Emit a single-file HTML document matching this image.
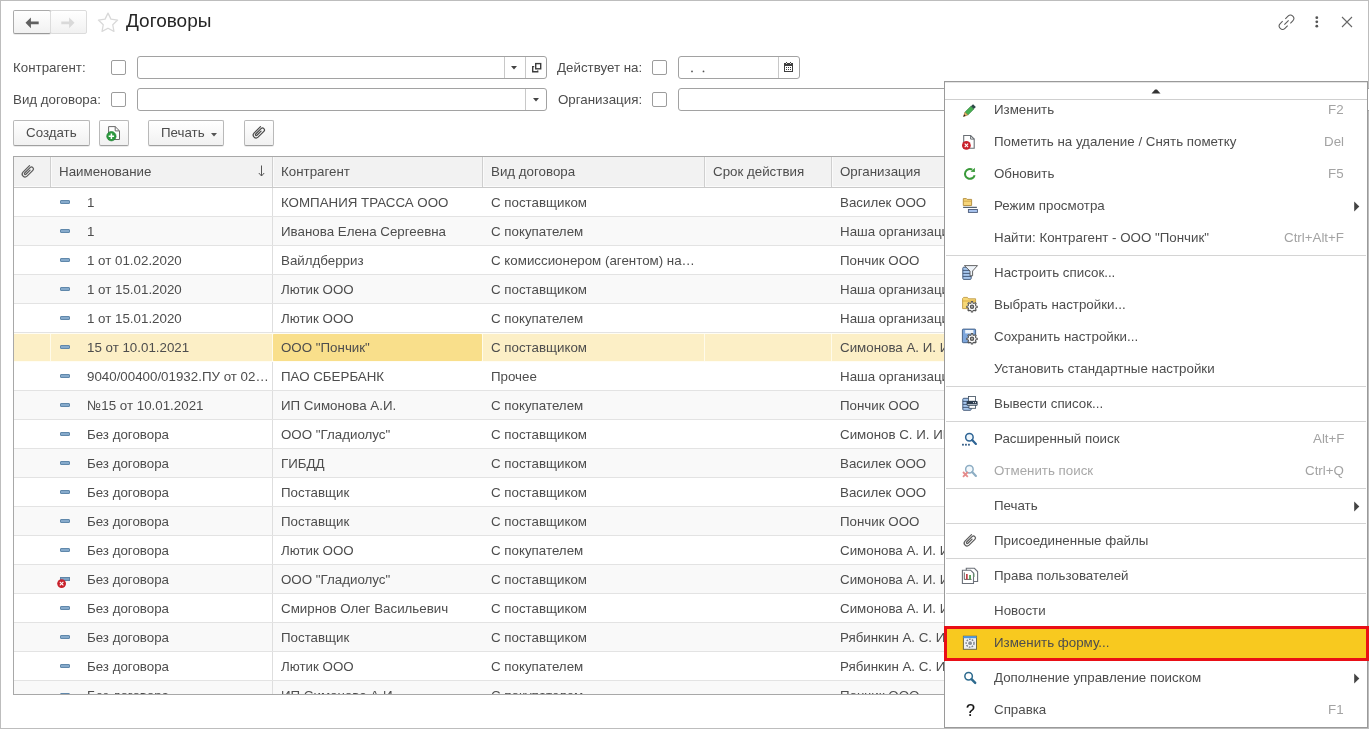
<!DOCTYPE html>
<html><head><meta charset="utf-8">
<style>
*{box-sizing:border-box;margin:0;padding:0}
html,body{width:1369px;height:729px;overflow:hidden;background:#fff}
body{position:relative;font-family:"Liberation Sans",sans-serif;font-size:13.33px;color:#4d4d4d}
.a{position:absolute}
.frame{left:0;top:0;width:1369px;height:729px;border:1px solid #bdbdbd}
.t{position:absolute;white-space:nowrap;line-height:15px;will-change:transform}
.btn{position:absolute;border:1px solid #b9b9b9;border-bottom-color:#a0a0a0;border-radius:2px;background:linear-gradient(#fff,#f1f1f1);box-shadow:0 1px 0 rgba(0,0,0,.08)}
.cb{position:absolute;width:15px;height:15px;border:1px solid #9c9c9c;border-radius:2px;background:#fff}
.inp{position:absolute;border:1px solid #a2a2a2;border-radius:3px;background:#fff}
.sep{position:absolute;top:0;bottom:0;width:1px;background:#c8c8c8}
</style></head><body>
<div class="a frame"></div>

<!-- nav buttons -->
<div class="btn" style="left:13px;top:10px;width:38px;height:24px;border-color:#ababab;border-bottom-color:#9a9a9a"></div>
<div class="btn" style="left:50px;top:10px;width:37px;height:24px;border-color:#dcdcdc;box-shadow:none"></div>
<svg class="a" style="left:25px;top:17px" width="14" height="12" viewBox="0 0 14 12"><path d="M0.5 5.8 L5.9 0.4 V4.4 H13.7 V7.2 H5.9 V11.2 Z" fill="#606060"/></svg>
<svg class="a" style="left:61px;top:17px" width="14" height="12" viewBox="0 0 14 12"><path d="M13.5 5.8 L8.1 0.4 V4.4 H0.3 V7.2 H8.1 V11.2 Z" fill="#d9d9d9"/></svg>
<svg class="a" style="left:97px;top:12px" width="23" height="23" viewBox="0 0 23 23"><path d="M11.00 1.10 L13.94 7.15 L20.61 8.08 L15.76 12.75 L16.94 19.37 L11.00 16.20 L5.06 19.37 L6.24 12.75 L1.39 8.08 L8.06 7.15 Z" stroke-linejoin="round" fill="none" stroke="#d9d9d9" stroke-width="1.3"/></svg>
<div class="t" style="left:126px;top:10px;font-size:19px;line-height:22px;color:#262626">Договоры</div>

<!-- top-right icons -->
<svg class="a" style="left:1275px;top:11px" width="24" height="22" viewBox="0 0 24 22"><g fill="none" stroke="#5a5a5a" stroke-width="1.05"><path d="M10.34 7.82 L13.03 5.13 A3.35 3.35 0 0 1 17.77 9.87 L15.37 12.27"/><path d="M12.66 14.58 L9.97 17.27 A3.35 3.35 0 0 1 5.23 12.53 L7.63 10.13"/><path d="M9.4 13.6 L13.6 9.4"/></g></svg>
<svg class="a" style="left:1313px;top:15px" width="8" height="14" viewBox="0 0 8 14"><g fill="#555"><circle cx="3.8" cy="2.7" r="1.4"/><circle cx="3.8" cy="6.8" r="1.4"/><circle cx="3.8" cy="11.2" r="1.4"/></g></svg>
<svg class="a" style="left:1341px;top:16px" width="12" height="12" viewBox="0 0 12 12"><path d="M1 1 L11 11 M11 1 L1 11" stroke="#666" stroke-width="1.1"/></svg>

<!-- filters row 1 -->
<div class="t" style="left:13px;top:60px">Контрагент:</div>
<div class="cb" style="left:111px;top:60px"></div>
<div class="inp" style="left:137px;top:56px;width:410px;height:23px">
  <div class="sep" style="left:366px"></div>
  <div class="sep" style="left:387px"></div>
</div>
<svg class="a" style="left:511px;top:66px" width="6" height="4"><path d="M0 0H6L3 3.5Z" fill="#444"/></svg>
<svg class="a" style="left:531px;top:62px" width="11" height="11" viewBox="0 0 11 11"><g fill="none" stroke="#3c3c3c" stroke-width="1.4"><rect x="4.7" y="1.6" width="5" height="5.2"/><path d="M3.2 4.6H1.7V9.7H6.7V8.4"/></g></svg>
<div class="t" style="left:557px;top:60px">Действует на:</div>
<div class="cb" style="left:652px;top:60px"></div>
<div class="inp" style="left:678px;top:56px;width:122px;height:23px">
  <div class="sep" style="left:99px"></div>
</div>
<svg class="a" style="left:688px;top:68px" width="20" height="6"><circle cx="4" cy="3.4" r="0.9" fill="#555"/><circle cx="15.5" cy="3.4" r="0.9" fill="#555"/></svg>
<svg class="a" style="left:784px;top:62px" width="10" height="10" viewBox="0 0 10 10" shape-rendering="crispEdges"><rect x="0" y="1" width="9" height="9" rx="1" fill="#3f3f3f"/><rect x="1" y="4" width="7" height="5" fill="#fff"/><g fill="#3f3f3f"><rect x="2" y="5" width="1" height="1"/><rect x="4" y="5" width="1" height="1"/><rect x="6" y="5" width="1" height="1"/><rect x="2" y="7" width="1" height="1"/><rect x="4" y="7" width="1" height="1"/><rect x="6" y="7" width="1" height="1"/></g><rect x="2" y="0" width="1" height="1" fill="#3f3f3f"/><rect x="6" y="0" width="1" height="1" fill="#3f3f3f"/><rect x="2" y="1" width="1" height="1" fill="#ddd"/><rect x="6" y="1" width="1" height="1" fill="#ddd"/></svg>

<!-- filters row 2 -->
<div class="t" style="left:13px;top:92px">Вид договора:</div>
<div class="cb" style="left:111px;top:92px"></div>
<div class="inp" style="left:137px;top:88px;width:410px;height:23px">
  <div class="sep" style="left:387px"></div>
</div>
<svg class="a" style="left:533px;top:98px" width="6" height="4"><path d="M0 0H6L3 3.5Z" fill="#444"/></svg>
<div class="t" style="left:558px;top:92px">Организация:</div>
<div class="cb" style="left:652px;top:92px"></div>
<div class="inp" style="left:678px;top:88px;width:700px;height:23px"></div>

<!-- command bar -->
<div class="btn" style="left:13px;top:120px;width:77px;height:26px"><div class="t" style="left:12px;top:4px;color:#4d4d4d">Создать</div></div>
<div class="btn" style="left:99px;top:120px;width:30px;height:26px"></div>
<svg class="a" style="left:100px;top:120px" width="29" height="26" viewBox="0 0 29 26"><path d="M8.6 6.6 H15.2 L19.5 10.9 V19.5 H8.6 Z" fill="#fff" stroke="#6a6a6a" stroke-width="1"/><path d="M15.2 6.6 V10.9 H19.5" fill="none" stroke="#6a6a6a" stroke-width="1"/><circle cx="11.4" cy="16.2" r="4.7" fill="#2b9a3e" stroke="#1f7a30" stroke-width="0.6"/><path d="M11.4 13.5 V18.9 M8.7 16.2 H14.1" stroke="#fff" stroke-width="1.5"/></svg>
<div class="btn" style="left:148px;top:120px;width:76px;height:26px"><div class="t" style="left:12px;top:4px">Печать</div></div>
<svg class="a" style="left:211px;top:133px" width="6" height="4"><path d="M0 0H6L3 3.5Z" fill="#555"/></svg>
<div class="btn" style="left:244px;top:120px;width:30px;height:26px"></div>
<svg class="a" style="left:244px;top:120px" width="30" height="26" viewBox="0 0 30 26"><path transform="translate(0.74,0.63) scale(0.95)" d="M16.62 6.29 L9.76 13.15 A3 3 0 0 0 14.00 17.39 L20.12 11.28 A2.05 2.05 0 0 0 17.22 8.38 L11.49 14.11 A0.95 0.95 0 0 0 12.83 15.45 L17.18 11.10" fill="none" stroke="#4a4a4a" stroke-width="1.3" stroke-linecap="round"/></svg>

<!-- TABLE -->
<div id="table" class="a" style="left:13px;top:156px;width:1350px;height:539px;border:1px solid #a8a8a8;overflow:hidden;background:#fff">
<div class="a" style="left:0;top:0;width:1348px;height:30px;background:#f2f2f2"></div>
<div class="a" style="left:0;top:30px;width:1348px;height:1px;background:#c9c9c9"></div>
<div class="a" style="left:0;top:29px;width:1348px;height:1px;background:#fbfbfb"></div>
<div class="a" style="left:36px;top:0;width:1px;height:30px;background:#cfcfcf"></div>
<div class="a" style="left:37px;top:0;width:1px;height:30px;background:#fafafa"></div>
<div class="a" style="left:258px;top:0;width:1px;height:30px;background:#cfcfcf"></div>
<div class="a" style="left:259px;top:0;width:1px;height:30px;background:#fafafa"></div>
<div class="a" style="left:468px;top:0;width:1px;height:30px;background:#cfcfcf"></div>
<div class="a" style="left:469px;top:0;width:1px;height:30px;background:#fafafa"></div>
<div class="a" style="left:690px;top:0;width:1px;height:30px;background:#cfcfcf"></div>
<div class="a" style="left:691px;top:0;width:1px;height:30px;background:#fafafa"></div>
<div class="a" style="left:817px;top:0;width:1px;height:30px;background:#cfcfcf"></div>
<div class="a" style="left:818px;top:0;width:1px;height:30px;background:#fafafa"></div>
<div class="t" style="left:44.9px;top:7.199999999999989px;">Наименование</div>
<div class="t" style="left:266.9px;top:7.199999999999989px;">Контрагент</div>
<div class="t" style="left:476.9px;top:7.199999999999989px;">Вид договора</div>
<div class="t" style="left:699.0px;top:7.199999999999989px;">Срок действия</div>
<div class="t" style="left:826.1px;top:7.199999999999989px;">Организация</div>
<svg class="a" style="left:-1px;top:2px" width="30" height="26" viewBox="0 0 30 26"><path transform="translate(0.74,0.63) scale(0.95)" d="M16.62 6.29 L9.76 13.15 A3 3 0 0 0 14.00 17.39 L20.12 11.28 A2.05 2.05 0 0 0 17.22 8.38 L11.49 14.11 A0.95 0.95 0 0 0 12.83 15.45 L17.18 11.10" fill="none" stroke="#5a5a5a" stroke-width="1.3" stroke-linecap="round"/></svg>
<svg class="a" style="left:244px;top:8px" width="7" height="12" viewBox="0 0 7 12"><path d="M3.5 0.5V11 M0.8 8 L3.5 11 L6.2 8" fill="none" stroke="#555" stroke-width="1"/></svg>
<div class="a" style="left:0;top:31px;width:1348px;height:28px;background:#fff"></div>
<div class="a" style="left:0;top:59px;width:1348px;height:1px;background:#e3e3e3"></div>
<div class="a" style="left:258px;top:31px;width:1px;height:28px;background:#dedede"></div>
<div class="a" style="left:46px;top:43px;width:10px;height:4px;background:#86aacb;border:1px solid #6088ab;border-radius:1px"></div>
<div class="t" style="left:72.6px;top:38.099999999999994px;">1</div>
<div class="t" style="left:266.8px;top:38.099999999999994px;">КОМПАНИЯ ТРАССА ООО</div>
<div class="t" style="left:476.9px;top:38.099999999999994px;">С поставщиком</div>
<div class="t" style="left:826.1px;top:38.099999999999994px;">Василек ООО</div>
<div class="a" style="left:0;top:60px;width:1348px;height:28px;background:#f9f9f9"></div>
<div class="a" style="left:0;top:88px;width:1348px;height:1px;background:#e3e3e3"></div>
<div class="a" style="left:258px;top:60px;width:1px;height:28px;background:#dedede"></div>
<div class="a" style="left:46px;top:72px;width:10px;height:4px;background:#86aacb;border:1px solid #6088ab;border-radius:1px"></div>
<div class="t" style="left:72.6px;top:67.1px;">1</div>
<div class="t" style="left:266.8px;top:67.1px;">Иванова Елена Сергеевна</div>
<div class="t" style="left:476.9px;top:67.1px;">С покупателем</div>
<div class="t" style="left:826.1px;top:67.1px;">Наша организация</div>
<div class="a" style="left:0;top:89px;width:1348px;height:28px;background:#fff"></div>
<div class="a" style="left:0;top:117px;width:1348px;height:1px;background:#e3e3e3"></div>
<div class="a" style="left:258px;top:89px;width:1px;height:28px;background:#dedede"></div>
<div class="a" style="left:46px;top:101px;width:10px;height:4px;background:#86aacb;border:1px solid #6088ab;border-radius:1px"></div>
<div class="t" style="left:72.6px;top:96.1px;">1 от 01.02.2020</div>
<div class="t" style="left:266.8px;top:96.1px;">Вайлдберриз</div>
<div class="t" style="left:476.9px;top:96.1px;">С комиссионером (агентом) на…</div>
<div class="t" style="left:826.1px;top:96.1px;">Пончик ООО</div>
<div class="a" style="left:0;top:118px;width:1348px;height:28px;background:#f9f9f9"></div>
<div class="a" style="left:0;top:146px;width:1348px;height:1px;background:#e3e3e3"></div>
<div class="a" style="left:258px;top:118px;width:1px;height:28px;background:#dedede"></div>
<div class="a" style="left:46px;top:130px;width:10px;height:4px;background:#86aacb;border:1px solid #6088ab;border-radius:1px"></div>
<div class="t" style="left:72.6px;top:125.10000000000002px;">1 от 15.01.2020</div>
<div class="t" style="left:266.8px;top:125.10000000000002px;">Лютик ООО</div>
<div class="t" style="left:476.9px;top:125.10000000000002px;">С поставщиком</div>
<div class="t" style="left:826.1px;top:125.10000000000002px;">Наша организация</div>
<div class="a" style="left:0;top:147px;width:1348px;height:28px;background:#fff"></div>
<div class="a" style="left:0;top:175px;width:1348px;height:1px;background:#e3e3e3"></div>
<div class="a" style="left:258px;top:147px;width:1px;height:28px;background:#dedede"></div>
<div class="a" style="left:46px;top:159px;width:10px;height:4px;background:#86aacb;border:1px solid #6088ab;border-radius:1px"></div>
<div class="t" style="left:72.6px;top:154.10000000000002px;">1 от 15.01.2020</div>
<div class="t" style="left:266.8px;top:154.10000000000002px;">Лютик ООО</div>
<div class="t" style="left:476.9px;top:154.10000000000002px;">С покупателем</div>
<div class="t" style="left:826.1px;top:154.10000000000002px;">Наша организация</div>
<div class="a" style="left:0;top:176px;width:1348px;height:28px;background:#fcefc6"></div>
<div class="a" style="left:0;top:204px;width:1348px;height:1px;background:#e3e3e3"></div>
<div class="a" style="left:0;top:176px;width:1348px;height:1px;background:#fffdf4"></div>
<div class="a" style="left:0;top:204px;width:1348px;height:1px;background:#fffdf4"></div>
<div class="a" style="left:0;top:205px;width:1348px;height:1px;background:#e3e3e3"></div>
<div class="a" style="left:259px;top:177px;width:209px;height:27px;background:#f9df8b;border-radius:1px"></div>
<div class="a" style="left:36px;top:177px;width:1px;height:27px;background:#fffbea"></div>
<div class="a" style="left:258px;top:177px;width:1px;height:27px;background:#fffbea"></div>
<div class="a" style="left:468px;top:177px;width:1px;height:27px;background:#fffbea"></div>
<div class="a" style="left:690px;top:177px;width:1px;height:27px;background:#fffbea"></div>
<div class="a" style="left:817px;top:177px;width:1px;height:27px;background:#fffbea"></div>
<div class="a" style="left:46px;top:188px;width:10px;height:4px;background:#86aacb;border:1px solid #6088ab;border-radius:1px"></div>
<div class="t" style="left:72.6px;top:183.10000000000002px;">15 от 10.01.2021</div>
<div class="t" style="left:266.8px;top:183.10000000000002px;">ООО "Пончик"</div>
<div class="t" style="left:476.9px;top:183.10000000000002px;">С поставщиком</div>
<div class="t" style="left:826.1px;top:183.10000000000002px;">Симонова А. И. ИП</div>
<div class="a" style="left:0;top:205px;width:1348px;height:28px;background:#fff"></div>
<div class="a" style="left:0;top:233px;width:1348px;height:1px;background:#e3e3e3"></div>
<div class="a" style="left:258px;top:205px;width:1px;height:28px;background:#dedede"></div>
<div class="a" style="left:46px;top:217px;width:10px;height:4px;background:#86aacb;border:1px solid #6088ab;border-radius:1px"></div>
<div class="t" style="left:72.6px;top:212.10000000000002px;">9040/00400/01932.ПУ от 02…</div>
<div class="t" style="left:266.8px;top:212.10000000000002px;">ПАО СБЕРБАНК</div>
<div class="t" style="left:476.9px;top:212.10000000000002px;">Прочее</div>
<div class="t" style="left:826.1px;top:212.10000000000002px;">Наша организация</div>
<div class="a" style="left:0;top:234px;width:1348px;height:28px;background:#f9f9f9"></div>
<div class="a" style="left:0;top:262px;width:1348px;height:1px;background:#e3e3e3"></div>
<div class="a" style="left:258px;top:234px;width:1px;height:28px;background:#dedede"></div>
<div class="a" style="left:46px;top:246px;width:10px;height:4px;background:#86aacb;border:1px solid #6088ab;border-radius:1px"></div>
<div class="t" style="left:72.6px;top:241.10000000000002px;">№15 от 10.01.2021</div>
<div class="t" style="left:266.8px;top:241.10000000000002px;">ИП Симонова А.И.</div>
<div class="t" style="left:476.9px;top:241.10000000000002px;">С покупателем</div>
<div class="t" style="left:826.1px;top:241.10000000000002px;">Пончик ООО</div>
<div class="a" style="left:0;top:263px;width:1348px;height:28px;background:#fff"></div>
<div class="a" style="left:0;top:291px;width:1348px;height:1px;background:#e3e3e3"></div>
<div class="a" style="left:258px;top:263px;width:1px;height:28px;background:#dedede"></div>
<div class="a" style="left:46px;top:275px;width:10px;height:4px;background:#86aacb;border:1px solid #6088ab;border-radius:1px"></div>
<div class="t" style="left:72.6px;top:270.1px;">Без договора</div>
<div class="t" style="left:266.8px;top:270.1px;">ООО "Гладиолус"</div>
<div class="t" style="left:476.9px;top:270.1px;">С поставщиком</div>
<div class="t" style="left:826.1px;top:270.1px;">Симонов С. И. ИП</div>
<div class="a" style="left:0;top:292px;width:1348px;height:28px;background:#f9f9f9"></div>
<div class="a" style="left:0;top:320px;width:1348px;height:1px;background:#e3e3e3"></div>
<div class="a" style="left:258px;top:292px;width:1px;height:28px;background:#dedede"></div>
<div class="a" style="left:46px;top:304px;width:10px;height:4px;background:#86aacb;border:1px solid #6088ab;border-radius:1px"></div>
<div class="t" style="left:72.6px;top:299.1px;">Без договора</div>
<div class="t" style="left:266.8px;top:299.1px;">ГИБДД</div>
<div class="t" style="left:476.9px;top:299.1px;">С поставщиком</div>
<div class="t" style="left:826.1px;top:299.1px;">Василек ООО</div>
<div class="a" style="left:0;top:321px;width:1348px;height:28px;background:#fff"></div>
<div class="a" style="left:0;top:349px;width:1348px;height:1px;background:#e3e3e3"></div>
<div class="a" style="left:258px;top:321px;width:1px;height:28px;background:#dedede"></div>
<div class="a" style="left:46px;top:333px;width:10px;height:4px;background:#86aacb;border:1px solid #6088ab;border-radius:1px"></div>
<div class="t" style="left:72.6px;top:328.1px;">Без договора</div>
<div class="t" style="left:266.8px;top:328.1px;">Поставщик</div>
<div class="t" style="left:476.9px;top:328.1px;">С поставщиком</div>
<div class="t" style="left:826.1px;top:328.1px;">Василек ООО</div>
<div class="a" style="left:0;top:350px;width:1348px;height:28px;background:#f9f9f9"></div>
<div class="a" style="left:0;top:378px;width:1348px;height:1px;background:#e3e3e3"></div>
<div class="a" style="left:258px;top:350px;width:1px;height:28px;background:#dedede"></div>
<div class="a" style="left:46px;top:362px;width:10px;height:4px;background:#86aacb;border:1px solid #6088ab;border-radius:1px"></div>
<div class="t" style="left:72.6px;top:357.1px;">Без договора</div>
<div class="t" style="left:266.8px;top:357.1px;">Поставщик</div>
<div class="t" style="left:476.9px;top:357.1px;">С поставщиком</div>
<div class="t" style="left:826.1px;top:357.1px;">Пончик ООО</div>
<div class="a" style="left:0;top:379px;width:1348px;height:28px;background:#fff"></div>
<div class="a" style="left:0;top:407px;width:1348px;height:1px;background:#e3e3e3"></div>
<div class="a" style="left:258px;top:379px;width:1px;height:28px;background:#dedede"></div>
<div class="a" style="left:46px;top:391px;width:10px;height:4px;background:#86aacb;border:1px solid #6088ab;border-radius:1px"></div>
<div class="t" style="left:72.6px;top:386.1px;">Без договора</div>
<div class="t" style="left:266.8px;top:386.1px;">Лютик ООО</div>
<div class="t" style="left:476.9px;top:386.1px;">С покупателем</div>
<div class="t" style="left:826.1px;top:386.1px;">Симонова А. И. ИП</div>
<div class="a" style="left:0;top:408px;width:1348px;height:28px;background:#f9f9f9"></div>
<div class="a" style="left:0;top:436px;width:1348px;height:1px;background:#e3e3e3"></div>
<div class="a" style="left:258px;top:408px;width:1px;height:28px;background:#dedede"></div>
<div class="a" style="left:46px;top:420px;width:10px;height:4px;background:#7fa3c4;border:1px solid #5f86a8"></div>
<svg class="a" style="left:43px;top:422px" width="10" height="10" viewBox="0 0 10 10"><circle cx="4.6" cy="4.6" r="4.4" fill="#c8212b"/><path d="M2.8 2.8 L6.4 6.4 M6.4 2.8 L2.8 6.4" stroke="#fff" stroke-width="1.1"/></svg>
<div class="t" style="left:72.6px;top:415.1px;">Без договора</div>
<div class="t" style="left:266.8px;top:415.1px;">ООО "Гладиолус"</div>
<div class="t" style="left:476.9px;top:415.1px;">С поставщиком</div>
<div class="t" style="left:826.1px;top:415.1px;">Симонова А. И. ИП</div>
<div class="a" style="left:0;top:437px;width:1348px;height:28px;background:#fff"></div>
<div class="a" style="left:0;top:465px;width:1348px;height:1px;background:#e3e3e3"></div>
<div class="a" style="left:258px;top:437px;width:1px;height:28px;background:#dedede"></div>
<div class="a" style="left:46px;top:449px;width:10px;height:4px;background:#86aacb;border:1px solid #6088ab;border-radius:1px"></div>
<div class="t" style="left:72.6px;top:444.1px;">Без договора</div>
<div class="t" style="left:266.8px;top:444.1px;">Смирнов Олег Васильевич</div>
<div class="t" style="left:476.9px;top:444.1px;">С поставщиком</div>
<div class="t" style="left:826.1px;top:444.1px;">Симонова А. И. ИП</div>
<div class="a" style="left:0;top:466px;width:1348px;height:28px;background:#f9f9f9"></div>
<div class="a" style="left:0;top:494px;width:1348px;height:1px;background:#e3e3e3"></div>
<div class="a" style="left:258px;top:466px;width:1px;height:28px;background:#dedede"></div>
<div class="a" style="left:46px;top:478px;width:10px;height:4px;background:#86aacb;border:1px solid #6088ab;border-radius:1px"></div>
<div class="t" style="left:72.6px;top:473.1px;">Без договора</div>
<div class="t" style="left:266.8px;top:473.1px;">Поставщик</div>
<div class="t" style="left:476.9px;top:473.1px;">С поставщиком</div>
<div class="t" style="left:826.1px;top:473.1px;">Рябинкин А. С. ИП</div>
<div class="a" style="left:0;top:495px;width:1348px;height:28px;background:#fff"></div>
<div class="a" style="left:0;top:523px;width:1348px;height:1px;background:#e3e3e3"></div>
<div class="a" style="left:258px;top:495px;width:1px;height:28px;background:#dedede"></div>
<div class="a" style="left:46px;top:507px;width:10px;height:4px;background:#86aacb;border:1px solid #6088ab;border-radius:1px"></div>
<div class="t" style="left:72.6px;top:502.1px;">Без договора</div>
<div class="t" style="left:266.8px;top:502.1px;">Лютик ООО</div>
<div class="t" style="left:476.9px;top:502.1px;">С покупателем</div>
<div class="t" style="left:826.1px;top:502.1px;">Рябинкин А. С. ИП</div>
<div class="a" style="left:0;top:524px;width:1348px;height:28px;background:#f9f9f9"></div>
<div class="a" style="left:0;top:552px;width:1348px;height:1px;background:#e3e3e3"></div>
<div class="a" style="left:258px;top:524px;width:1px;height:28px;background:#dedede"></div>
<div class="a" style="left:46px;top:536px;width:10px;height:4px;background:#86aacb;border:1px solid #6088ab;border-radius:1px"></div>
<div class="t" style="left:72.6px;top:531.1px;">Без договора</div>
<div class="t" style="left:266.8px;top:531.1px;">ИП Симонова А.И.</div>
<div class="t" style="left:476.9px;top:531.1px;">С покупателем</div>
<div class="t" style="left:826.1px;top:531.1px;">Пончик ООО</div>
</div>

<!-- MENU -->
<div id="menu" class="a" style="left:944px;top:81px;width:424px;height:647px;border:1px solid #9a9a9a;background:#fff;box-shadow:0 0 0 0 #000">
<div class="a" style="left:-1px;top:544px;width:425px;height:35px;background:#f8c91f;border:3px solid #e90f16"></div>
<div class="a" style="left:0;top:0;width:422px;height:17px;background:#fff;z-index:2"></div>
<div class="a" style="left:0;top:17px;width:422px;height:1px;background:#cfcfcf;z-index:2"></div>
<svg class="a" style="left:206px;top:6.5px;z-index:3" width="10" height="5" viewBox="0 0 10 5"><path d="M0.5 4.4 L4.1 0.6 H5.9 L9.5 4.4Z" fill="#333"/></svg>
<div class="a" style="left:0;top:0;width:422px;height:1px;background:#e4e4e4;z-index:3"></div>
<div class="t" style="left:48.89999999999998px;top:20.099999999999994px;color:#4d4d4d">Изменить</div>
<div class="t" style="right:23px;top:20.099999999999994px;color:#a3a3a3">F2</div>
<div class="a" style="left:13px;top:18px;width:24px;height:20px"><svg width="24" height="20" viewBox="0 0 24 20"><polygon points="6.92,12.26 9.74,15.08 15.75,9.07 12.93,6.25" fill="#46b050" stroke="#2f7d3a" stroke-width="0.7"/><polygon points="12.93,6.25 15.75,9.07 17.87,6.95 15.05,4.13" fill="#2d4a48"/><polygon points="6.92,12.26 9.74,15.08 5.5,16.5" fill="#eeb469" stroke="#a87a3a" stroke-width="0.6"/><polygon points="5.3,16.7 6.2,14.3 7.7,15.8" fill="#222"/></svg></div>
<div class="t" style="left:48.89999999999998px;top:52.099999999999994px;color:#4d4d4d">Пометить на удаление / Снять пометку</div>
<div class="t" style="right:23px;top:52.099999999999994px;color:#a3a3a3">Del</div>
<div class="a" style="left:13px;top:50px;width:24px;height:20px"><svg width="24" height="20" viewBox="0 0 24 20"><path d="M5.7 3.5 H12.6 L16.2 7.1 V16.2 H5.7 Z" fill="#fff" stroke="#6b7075" stroke-width="1.1"/><path d="M12.6 3.5 V7.1 H16.2" fill="none" stroke="#6b7075" stroke-width="1"/><circle cx="8.4" cy="13.4" r="4.4" fill="#c9212b"/><path d="M6.7 11.7 L10.1 15.1 M10.1 11.7 L6.7 15.1" stroke="#fff" stroke-width="1.1"/></svg></div>
<div class="t" style="left:48.89999999999998px;top:84.1px;color:#4d4d4d">Обновить</div>
<div class="t" style="right:23px;top:84.1px;color:#a3a3a3">F5</div>
<div class="a" style="left:13px;top:82px;width:24px;height:20px"><svg width="24" height="20" viewBox="0 0 24 20"><path d="M14.35 5.66 A4.9 4.9 0 1 0 16.63 11.17" fill="none" stroke="#3a9a3a" stroke-width="2"/><polygon points="12.6,7.8 16.9,3.7 16.9,7.9" fill="#3a9a3a"/></svg></div>
<div class="t" style="left:48.89999999999998px;top:116.1px;color:#4d4d4d">Режим просмотра</div>
<svg class="a" style="left:409px;top:118.5px" width="6" height="11" viewBox="0 0 6 11"><path d="M0.2 0.5 L5.3 5.5 L0.2 10.5Z" fill="#444"/></svg>
<div class="a" style="left:13px;top:114px;width:24px;height:20px"><svg width="24" height="20" viewBox="0 0 24 20"><path d="M5.3 9.5 V2.6 H8.4 L9.2 3.4 H13.6 V9.5 Z" fill="#f6d57a" stroke="#b08a3a" stroke-width="0.9"/><path d="M5.3 5.2 H13.6" stroke="#c9a040" stroke-width="0.8"/><rect x="5.1" y="10.8" width="13.8" height="1" fill="#2c3e50"/><rect x="10.4" y="13.5" width="9" height="2.9" fill="#a8c4ef" stroke="#4a5a78" stroke-width="0.9"/></svg></div>
<div class="t" style="left:48.89999999999998px;top:148.1px;color:#4d4d4d">Найти: Контрагент - ООО "Пончик"</div>
<div class="t" style="right:23px;top:148.1px;color:#a3a3a3">Ctrl+Alt+F</div>
<div class="a" style="left:1px;top:173px;width:420px;height:1px;background:#d4d4d4"></div>
<div class="t" style="left:48.89999999999998px;top:183.10000000000002px;color:#4d4d4d">Настроить список...</div>
<div class="a" style="left:13px;top:181px;width:24px;height:20px"><svg width="24" height="20" viewBox="0 0 24 20"><rect x="4.8" y="4.2" width="8.4" height="12.2" rx="1" fill="#a8c8ee" stroke="#3a5070" stroke-width="0.9"/><path d="M4.8 7.4H13.2M4.8 10.4H13.2M4.8 13.4H13.2" stroke="#3a5070" stroke-width="0.9"/><path d="M6.4 2.6 H19.5 L14.6 8 V12.8 H12 V8 Z" fill="#eef3f9" stroke="#555" stroke-width="0.9" stroke-linejoin="round"/></svg></div>
<div class="t" style="left:48.89999999999998px;top:215.10000000000002px;color:#4d4d4d">Выбрать настройки...</div>
<div class="a" style="left:13px;top:213px;width:24px;height:20px"><svg width="24" height="20" viewBox="0 0 24 20"><path d="M4.6 13.6 V3.4 L5.6 2.4 H9.4 L10.6 3.8 H17.6 V13.6 Z" fill="#f7d877" stroke="#c09a45" stroke-width="0.9"/><path d="M4.6 6 H17.6" stroke="#d9a93a" stroke-width="0.9"/><polygon points="13.10,7.90 13.35,6.54 14.65,6.54 14.90,7.90 16.12,8.41 17.26,7.62 18.18,8.54 17.39,9.68 17.90,10.90 19.26,11.15 19.26,12.45 17.90,12.70 17.39,13.92 18.18,15.06 17.26,15.98 16.12,15.19 14.90,15.70 14.65,17.06 13.35,17.06 13.10,15.70 11.88,15.19 10.74,15.98 9.82,15.06 10.61,13.92 10.10,12.70 8.74,12.45 8.74,11.15 10.10,10.90 10.61,9.68 9.82,8.54 10.74,7.62 11.88,8.41" fill="#fff" stroke="#555" stroke-width="1.05" stroke-linejoin="round"/><circle cx="14" cy="11.8" r="1.65" fill="#b0b0b0" stroke="#555" stroke-width="1.2"/></svg></div>
<div class="t" style="left:48.89999999999998px;top:247.10000000000002px;color:#4d4d4d">Сохранить настройки...</div>
<div class="a" style="left:13px;top:245px;width:24px;height:20px"><svg width="24" height="20" viewBox="0 0 24 20"><rect x="4.4" y="2.1" width="13.2" height="13.6" rx="0.8" fill="#7da6dc" stroke="#3d5a80" stroke-width="0.9"/><rect x="7.2" y="3" width="8.2" height="3.4" fill="#eef4fb"/><polygon points="13.10,7.90 13.35,6.54 14.65,6.54 14.90,7.90 16.12,8.41 17.26,7.62 18.18,8.54 17.39,9.68 17.90,10.90 19.26,11.15 19.26,12.45 17.90,12.70 17.39,13.92 18.18,15.06 17.26,15.98 16.12,15.19 14.90,15.70 14.65,17.06 13.35,17.06 13.10,15.70 11.88,15.19 10.74,15.98 9.82,15.06 10.61,13.92 10.10,12.70 8.74,12.45 8.74,11.15 10.10,10.90 10.61,9.68 9.82,8.54 10.74,7.62 11.88,8.41" fill="#fff" stroke="#555" stroke-width="1.05" stroke-linejoin="round"/><circle cx="14" cy="11.8" r="1.65" fill="#b0b0b0" stroke="#555" stroke-width="1.2"/></svg></div>
<div class="t" style="left:48.89999999999998px;top:279.1px;color:#4d4d4d">Установить стандартные настройки</div>
<div class="a" style="left:1px;top:304px;width:420px;height:1px;background:#d4d4d4"></div>
<div class="t" style="left:48.89999999999998px;top:314.1px;color:#4d4d4d">Вывести список...</div>
<div class="a" style="left:13px;top:312px;width:24px;height:20px"><svg width="24" height="20" viewBox="0 0 24 20"><rect x="4.8" y="4.3" width="8.4" height="12" rx="1" fill="#a8c8ee" stroke="#3a5070" stroke-width="0.9"/><path d="M4.8 7.4H10M4.8 10.4H10M4.8 13.4H13.2" stroke="#3a5070" stroke-width="0.9"/><rect x="10.5" y="2.4" width="7" height="4.8" fill="#fff" stroke="#3a4a5a" stroke-width="0.8"/><rect x="8.6" y="7" width="11" height="4.8" rx="1" fill="#2e3e50"/><circle cx="15.6" cy="8.6" r="0.55" fill="#fff"/><circle cx="17.5" cy="8.6" r="0.55" fill="#fff"/><rect x="9.5" y="10.2" width="9.2" height="0.9" fill="#dfe6ee"/><rect x="11" y="11.3" width="6.6" height="3" fill="#fff" stroke="#3a4a5a" stroke-width="0.8"/></svg></div>
<div class="a" style="left:1px;top:339px;width:420px;height:1px;background:#d4d4d4"></div>
<div class="t" style="left:48.89999999999998px;top:349.1px;color:#4d4d4d">Расширенный поиск</div>
<div class="t" style="right:23px;top:349.1px;color:#a3a3a3">Alt+F</div>
<div class="a" style="left:13px;top:347px;width:24px;height:20px"><svg width="24" height="20" viewBox="0 0 24 20"><circle cx="11.4" cy="8.2" r="3.75" fill="#eef6fc" stroke="#2e6494" stroke-width="1.5"/><path d="M14.2 11 L17.9 14.9" stroke="#2e6494" stroke-width="2.2" stroke-linecap="round"/><g fill="#2b5580"><rect x="4.1" y="14.8" width="1.7" height="1.8"/><rect x="7.1" y="14.8" width="1.7" height="1.8"/><rect x="10.1" y="14.8" width="1.7" height="1.8"/></g></svg></div>
<div class="t" style="left:48.89999999999998px;top:381.1px;color:#a8a8a8">Отменить поиск</div>
<div class="t" style="right:23px;top:381.1px;color:#a3a3a3">Ctrl+Q</div>
<div class="a" style="left:13px;top:379px;width:24px;height:20px"><svg width="24" height="20" viewBox="0 0 24 20"><circle cx="11.4" cy="8.2" r="3.75" fill="#f2f8fc" stroke="#8eaec4" stroke-width="1.5"/><path d="M14.2 11 L17.9 14.9" stroke="#8eaec4" stroke-width="2.2" stroke-linecap="round"/><path d="M5 11 L9.8 15.8 M9.8 11 L5 15.8" stroke="#e58c8c" stroke-width="1.8"/></svg></div>
<div class="a" style="left:1px;top:406px;width:420px;height:1px;background:#d4d4d4"></div>
<div class="t" style="left:48.89999999999998px;top:416.1px;color:#4d4d4d">Печать</div>
<svg class="a" style="left:409px;top:418.5px" width="6" height="11" viewBox="0 0 6 11"><path d="M0.2 0.5 L5.3 5.5 L0.2 10.5Z" fill="#444"/></svg>
<div class="a" style="left:1px;top:441px;width:420px;height:1px;background:#d4d4d4"></div>
<div class="t" style="left:48.89999999999998px;top:451.1px;color:#4d4d4d">Присоединенные файлы</div>
<svg class="a" style="left:10px;top:445.6px" width="30" height="26" viewBox="0 0 30 26"><path transform="translate(0.74,0.63) scale(0.95)" d="M16.62 6.29 L9.76 13.15 A3 3 0 0 0 14.00 17.39 L20.12 11.28 A2.05 2.05 0 0 0 17.22 8.38 L11.49 14.11 A0.95 0.95 0 0 0 12.83 15.45 L17.18 11.10" fill="none" stroke="#5a5a5a" stroke-width="1.3" stroke-linecap="round"/></svg>
<div class="a" style="left:1px;top:476px;width:420px;height:1px;background:#d4d4d4"></div>
<div class="t" style="left:48.89999999999998px;top:486.1px;color:#4d4d4d">Права пользователей</div>
<div class="a" style="left:13px;top:484px;width:24px;height:20px"><svg width="24" height="20" viewBox="0 0 24 20"><path d="M8.3 2.3 H16.4 L19.6 5.5 V15.5 H8.3 Z" fill="#fff" stroke="#6b7078" stroke-width="1.1"/><path d="M4.4 4.2 H12.6 L15.5 7.1 V17.5 H4.4 Z" fill="#fff" stroke="#6b7078" stroke-width="1.1"/><path d="M6.3 6.4 V13.4 H13.6" fill="none" stroke="#555" stroke-width="0.9"/><rect x="8" y="8" width="1.7" height="5.4" fill="#c04048"/><rect x="11.2" y="9" width="1.7" height="4.4" fill="#4a9a50"/><rect x="15.5" y="7.4" width="1" height="3.6" fill="#6aa070"/></svg></div>
<div class="a" style="left:1px;top:511px;width:420px;height:1px;background:#d4d4d4"></div>
<div class="t" style="left:48.89999999999998px;top:521.1px;color:#4d4d4d">Новости</div>
<div class="t" style="left:48.89999999999998px;top:553.1px;color:#4d4d4d">Изменить форму...</div>
<div class="a" style="left:13px;top:551px;width:24px;height:20px"><svg width="24" height="20" viewBox="0 0 24 20"><rect x="5.4" y="3.2" width="13.1" height="13.1" fill="#eef0f4" stroke="#6f6a45" stroke-width="1"/><rect x="5.4" y="3.2" width="13.1" height="2" fill="#4a96e0"/><circle cx="12.1" cy="10.2" r="3.9" fill="#f4f5f7" stroke="#7c828a" stroke-width="1.4" stroke-dasharray="1.7 1.1"/><circle cx="12.1" cy="10.2" r="1.9" fill="#8a9098"/></svg></div>
<div class="t" style="left:48.89999999999998px;top:588.1px;color:#4d4d4d">Дополнение управление поиском</div>
<svg class="a" style="left:409px;top:590.5px" width="6" height="11" viewBox="0 0 6 11"><path d="M0.2 0.5 L5.3 5.5 L0.2 10.5Z" fill="#444"/></svg>
<div class="a" style="left:13px;top:586px;width:24px;height:20px"><svg width="24" height="20" viewBox="0 0 24 20"><circle cx="10.6" cy="8.2" r="3.75" fill="none" stroke="#2d6a8e" stroke-width="1.5"/><path d="M13.5 11.1 L17.2 14.9" stroke="#2d6a8e" stroke-width="2.4" stroke-linecap="round"/></svg></div>
<div class="t" style="left:48.89999999999998px;top:620.1px;color:#4d4d4d">Справка</div>
<div class="t" style="right:23px;top:620.1px;color:#a3a3a3">F1</div>
<div class="a" style="left:13px;top:618px;width:24px;height:20px"><div style="position:absolute;left:8.4px;top:2.1px;font:16px 'Liberation Sans',sans-serif;-webkit-text-stroke:0.2px #111;color:#111;line-height:18px;letter-spacing:0;will-change:transform">?</div></div>
</div>

</body></html>
